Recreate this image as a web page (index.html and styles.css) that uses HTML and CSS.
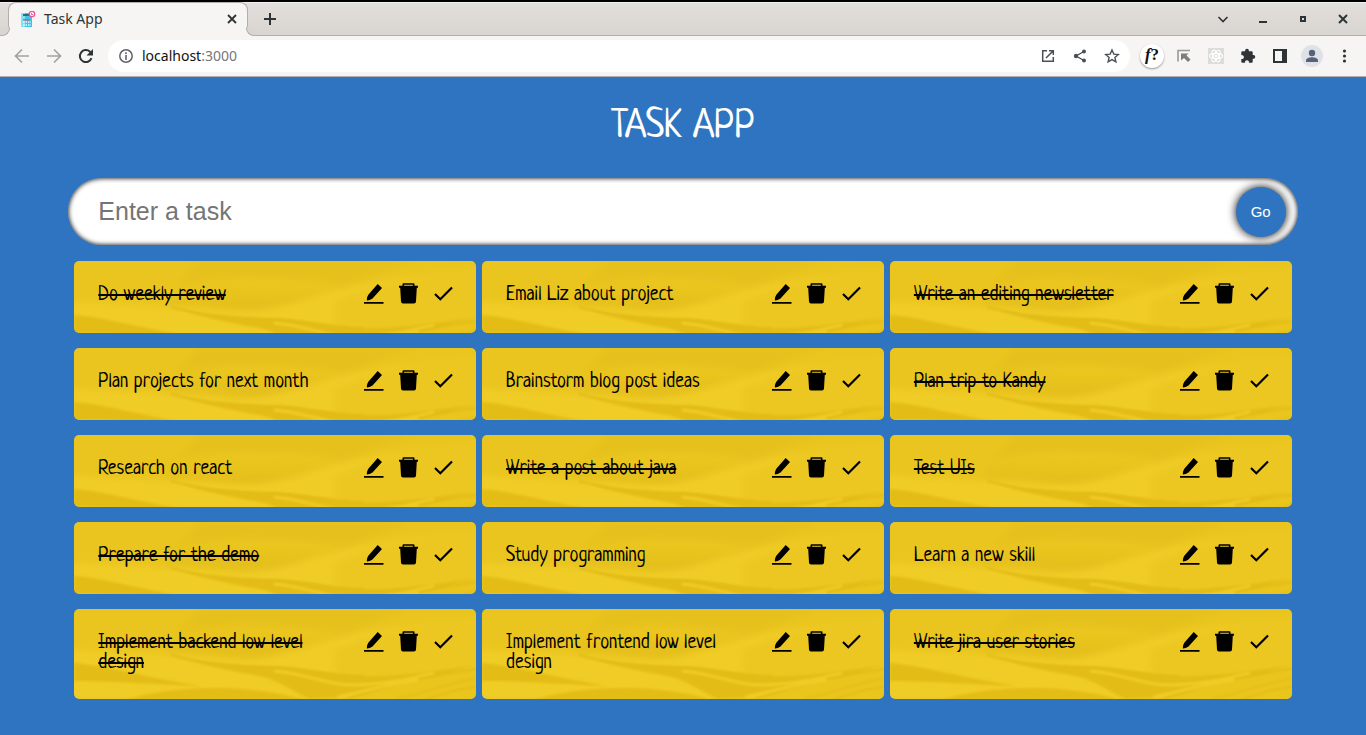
FILE: index.html
```html
<!DOCTYPE html>
<html lang="en">
<head>
<meta charset="utf-8">
<title>Task App</title>
<link rel="stylesheet" href="styles.css">
</head>
<body>
<svg class="sprite" aria-hidden="true">
  <symbol id="edit" viewBox="0.5 0.5 20 22"><path d="M14.200 1.500l4.300 3.900-9.500 10.600q-3 2.200-5.500 2.100-.6-2.800 1.300-5.900zM0 19.500h20v1.700H0z"/></symbol>
  <symbol id="trash" viewBox="0.5 0.500 20 22"><path d="M0.500 3.300H4V1.800Q4 .8 5 .8h10q1 0 1 1v1.500h3.500v2H18.300L17.500 19q-.1 2-2 2h-11q-1.900 0-2-2L1.700 5.300H.5zM5.600 3.300h8.800V2.200H5.600z"/></symbol>
  <symbol id="check" viewBox="0.5 0.500 20 22"><path d="M1.500 11.500l5.300 5.300L18.500 5" fill="none" stroke="currentColor" stroke-width="2.200"/></symbol>
</svg>

<header class="browser">
  <div class="tab-strip">
    <div class="tab">
      <svg class="favicon" width="16" height="16" viewBox="0 0 16 16"><path fill="#3bc5ea" d="M1 2h11v14H1z"/><path fill="#82e2f5" d="M1 2h4v14H1z"/><path fill="#20718f" d="M3 3h8v2H3z"/><path fill="#ef5577" d="M3 8h7v1.500H3z"/><path stroke="#e2fbff" stroke-dasharray="1.500 1" stroke-width="1.500" d="M3 11h8M3 14h8"/><circle cx="12" cy="3" r="2.700" fill="#fff" stroke="#f0568f" stroke-width="1.300"/><path d="M11.500 2v1.500H13" fill="none" stroke="#f0568f"/></svg>
      <span class="tab-title">Task App</span>
      <button class="tab-close" aria-label="Close tab"><svg width="10" height="10" viewBox="0 0 10 10"><path d="M1 1l8 8M9 1L1 9" stroke="currentColor" stroke-width="1.800"/></svg></button>
    </div>
    <button class="new-tab" aria-label="New tab"><svg width="12" height="12" viewBox="0 0 12 12"><path d="M6 0v12M0 6h12" stroke="currentColor" stroke-width="2"/></svg></button>
    <div class="window-controls">
      <button aria-label="Search tabs"><svg width="12" height="12" viewBox="0 0 12 12"><path d="M1.500 4L6 8.500 10.500 4" fill="none" stroke="currentColor" stroke-width="1.600"/></svg></button>
      <button aria-label="Minimize"><svg width="12" height="12" viewBox="0 0 12 12"><path d="M2 8h8v2H2z"/></svg></button>
      <button aria-label="Maximize"><svg width="12" height="12" viewBox="0 0 12 12"><path d="M4 4h4v4H4z" fill="none" stroke="currentColor" stroke-width="2"/></svg></button>
      <button aria-label="Close"><svg width="12" height="12" viewBox="0 0 12 12"><path d="M2 2l8 8M10 2l-8 8" stroke="currentColor" stroke-width="2"/></svg></button>
    </div>
  </div>
  <div class="toolbar">
    <nav class="tools">
      <button class="dim" aria-label="Back"><svg width="16" height="16" viewBox="0 0 16 16"><path d="M15 8H2M8 1.500L1.500 8 8 14.500" fill="none" stroke="currentColor" stroke-width="1.700"/></svg></button>
      <button class="dim" aria-label="Forward"><svg width="16" height="16" viewBox="0 0 16 16"><path d="M1 8h13M8 1.500L14.500 8 8 14.500" fill="none" stroke="currentColor" stroke-width="1.700"/></svg></button>
      <button aria-label="Reload"><svg width="16" height="16" viewBox="0 0 16 16"><path d="M13.500 10.200A6 6 0 1 1 12 3.700L13.600 5.500" fill="none" stroke="currentColor" stroke-width="2"/><path d="M15 1v6.500H8.500z"/></svg></button>
    </nav>
    <div class="address">
      <svg class="info" width="16" height="16" viewBox="0 0 16 16"><circle cx="8" cy="8" r="6.200" fill="none" stroke="currentColor" stroke-width="1.500"/><path d="M7.200 4.300h1.600v1.600H7.200zM7.200 7h1.600v5H7.200z"/></svg>
      <span class="url">localhost<span class="port">:3000</span></span>
      <div class="tools soft">
        <button aria-label="Open in app"><svg width="16" height="16" viewBox="0 0 16 16"><path d="M7 2.700H2.700v10.600h10.600V9M9 2.700h4.300V7M13.300 2.700L6 10" fill="none" stroke="currentColor" stroke-width="1.500"/></svg></button>
        <button aria-label="Share"><svg width="16" height="16" viewBox="0 0 16 16"><path d="M12 3.500L4 8l8 4.500" fill="none" stroke="currentColor" stroke-width="1.400"/><circle cx="12" cy="3.500" r="2"/><circle cx="4" cy="8" r="2.200"/><circle cx="12" cy="12.500" r="2"/></svg></button>
        <button aria-label="Bookmark"><svg width="16" height="16" viewBox="0 0 16 16"><path d="M8 2l1.800 4.100 4.500.4-3.400 3 1 4.400L8 11.600l-3.900 2.300 1-4.400-3.400-3 4.500-.4z" fill="none" stroke="currentColor" stroke-width="1.400"/></svg></button>
      </div>
    </div>
    <div class="tools">
      <button aria-label="Font finder"><span class="font-badge"><i>f</i>?</span></button>
      <button class="grey" aria-label="Cursor extension"><svg width="16" height="16" viewBox="0 0 16 16"><path d="M2 13.500V2.500h12" fill="none" stroke="#999" stroke-width="1.600"/><path d="M5 5.500h7.500l-2 2 4 4-2.500 2.500-4-4-3 2.500z"/></svg></button>
      <button aria-label="React tools"><svg width="16" height="16" viewBox="0 0 16 16"><path fill="#dcdcda" d="M0 0h16v16H0z"/><g fill="none" stroke="#fff" stroke-width="1.100"><ellipse cx="8" cy="8" rx="6.500" ry="2.600"/><ellipse cx="8" cy="8" rx="6.500" ry="2.600" transform="rotate(60 8 8)"/><ellipse cx="8" cy="8" rx="6.500" ry="2.600" transform="rotate(120 8 8)"/></g><circle cx="8" cy="8" r="1.300" fill="#fff"/></svg></button>
      <button aria-label="Extensions"><svg width="16" height="16" viewBox="0 0 16 16"><path d="M1.300 4.300Q1.300 3.200 2.400 3.200H5.200a1.900 1.900 0 1 1 3.600 0H11.600Q12.700 3.200 12.700 4.300V7.100a1.900 1.900 0 1 1 0 3.600V13.700Q12.700 14.800 11.600 14.800H8.900a2 2 0 1 0-3.800 0H2.400Q1.300 14.800 1.300 13.700V11a2 2 0 1 0 0-3.800z"/></svg></button>
      <button aria-label="Side panel"><svg width="16" height="16" viewBox="0 0 16 16"><path fill-rule="evenodd" d="M1 1h14v14H1zM3 3v10h7V3z"/></svg></button>
      <button aria-label="Profile"><svg width="22" height="22" viewBox="0 0 22 22"><circle cx="11" cy="11" r="11" fill="#dee1e6"/><g fill="#57617a"><circle cx="11" cy="8" r="3.200"/><path d="M5 17v-1.500C5 13 9 12.300 11 12.300s6 .7 6 3.200V17z"/></g></svg></button>
      <button aria-label="Menu"><svg width="16" height="16" viewBox="0 0 16 16"><circle cx="8.500" cy="3" r="1.600"/><circle cx="8.500" cy="8" r="1.600"/><circle cx="8.500" cy="13" r="1.600"/></svg></button>
    </div>
  </div>
</header>

<main class="app">
  <h1 class="heading">Task App</h1>
  <form class="entry">
    <input class="entry-box" type="text" placeholder="Enter a task" aria-label="Enter a task">
    <button class="entry-go" type="button">Go</button>
  </form>
  <ul class="tasks">
    <li class="task done"><span class="task-text">Do weekly review</span><span class="actions"><button aria-label="Edit"><svg><use href="#edit"/></svg></button><button aria-label="Delete"><svg><use href="#trash"/></svg></button><button aria-label="Done"><svg><use href="#check"/></svg></button></span></li>
    <li class="task"><span class="task-text">Email Liz about project</span><span class="actions"><button aria-label="Edit"><svg><use href="#edit"/></svg></button><button aria-label="Delete"><svg><use href="#trash"/></svg></button><button aria-label="Done"><svg><use href="#check"/></svg></button></span></li>
    <li class="task done"><span class="task-text">Write an editing newsletter</span><span class="actions"><button aria-label="Edit"><svg><use href="#edit"/></svg></button><button aria-label="Delete"><svg><use href="#trash"/></svg></button><button aria-label="Done"><svg><use href="#check"/></svg></button></span></li>
    <li class="task"><span class="task-text">Plan projects for next month</span><span class="actions"><button aria-label="Edit"><svg><use href="#edit"/></svg></button><button aria-label="Delete"><svg><use href="#trash"/></svg></button><button aria-label="Done"><svg><use href="#check"/></svg></button></span></li>
    <li class="task"><span class="task-text">Brainstorm blog post ideas</span><span class="actions"><button aria-label="Edit"><svg><use href="#edit"/></svg></button><button aria-label="Delete"><svg><use href="#trash"/></svg></button><button aria-label="Done"><svg><use href="#check"/></svg></button></span></li>
    <li class="task done"><span class="task-text">Plan trip to Kandy</span><span class="actions"><button aria-label="Edit"><svg><use href="#edit"/></svg></button><button aria-label="Delete"><svg><use href="#trash"/></svg></button><button aria-label="Done"><svg><use href="#check"/></svg></button></span></li>
    <li class="task"><span class="task-text">Research on react</span><span class="actions"><button aria-label="Edit"><svg><use href="#edit"/></svg></button><button aria-label="Delete"><svg><use href="#trash"/></svg></button><button aria-label="Done"><svg><use href="#check"/></svg></button></span></li>
    <li class="task done"><span class="task-text">Write a post about java</span><span class="actions"><button aria-label="Edit"><svg><use href="#edit"/></svg></button><button aria-label="Delete"><svg><use href="#trash"/></svg></button><button aria-label="Done"><svg><use href="#check"/></svg></button></span></li>
    <li class="task done"><span class="task-text">Test UIs</span><span class="actions"><button aria-label="Edit"><svg><use href="#edit"/></svg></button><button aria-label="Delete"><svg><use href="#trash"/></svg></button><button aria-label="Done"><svg><use href="#check"/></svg></button></span></li>
    <li class="task done"><span class="task-text">Prepare for the demo</span><span class="actions"><button aria-label="Edit"><svg><use href="#edit"/></svg></button><button aria-label="Delete"><svg><use href="#trash"/></svg></button><button aria-label="Done"><svg><use href="#check"/></svg></button></span></li>
    <li class="task"><span class="task-text">Study programming</span><span class="actions"><button aria-label="Edit"><svg><use href="#edit"/></svg></button><button aria-label="Delete"><svg><use href="#trash"/></svg></button><button aria-label="Done"><svg><use href="#check"/></svg></button></span></li>
    <li class="task"><span class="task-text">Learn a new skill</span><span class="actions"><button aria-label="Edit"><svg><use href="#edit"/></svg></button><button aria-label="Delete"><svg><use href="#trash"/></svg></button><button aria-label="Done"><svg><use href="#check"/></svg></button></span></li>
    <li class="task done"><span class="task-text">Implement backend low level design</span><span class="actions"><button aria-label="Edit"><svg><use href="#edit"/></svg></button><button aria-label="Delete"><svg><use href="#trash"/></svg></button><button aria-label="Done"><svg><use href="#check"/></svg></button></span></li>
    <li class="task"><span class="task-text">Implement frontend low level design</span><span class="actions"><button aria-label="Edit"><svg><use href="#edit"/></svg></button><button aria-label="Delete"><svg><use href="#trash"/></svg></button><button aria-label="Done"><svg><use href="#check"/></svg></button></span></li>
    <li class="task done"><span class="task-text">Write jira user stories</span><span class="actions"><button aria-label="Edit"><svg><use href="#edit"/></svg></button><button aria-label="Delete"><svg><use href="#trash"/></svg></button><button aria-label="Done"><svg><use href="#check"/></svg></button></span></li>
  </ul>
</main>
</body>
</html>
```
FILE: styles.css
```css
* { box-sizing: border-box; }

body {
  margin: 0;
  min-height: 100vh;
  background: #2f74c0;
  font-family: "Neucha", "Liberation Sans Narrow", "Liberation Sans", sans-serif;
}

button {
  padding: 0;
  border: 0;
  background: none;
  color: inherit;
  font: inherit;
  display: flex;
  align-items: center;
  justify-content: center;
}

svg { fill: currentColor; display: block; }
.sprite { display: none; }

.browser {
  border-top: 2px solid #000;
  border-bottom: 1px solid #b5b0ab;
  background: #f6f5f3;
  color: #2e3436;
  font: 14px/20px "Noto Sans", "Open Sans", sans-serif;
}

.tab-strip {
  display: flex;
  height: 34px;
  padding: 0 3px 0 8px;
  border-top: 1px solid #f3f1ef;
  border-bottom: 1px solid #b1aeab;
  background: linear-gradient(#e1dedb, #d9d6d1);
}

.tab {
  position: relative;
  display: flex;
  align-items: center;
  width: 240px;
  height: 34px;
  margin-top: -1px;
  padding: 0 10px 2px 11px;
  border: 1px solid #b1aeab;
  border-bottom: 0;
  border-radius: 8px 8px 0 0;
  background: #f6f5f3;
}

.tab::before,
.tab::after {
  content: "";
  position: absolute;
  bottom: 0;
  width: 8px;
  height: 8px;
  border-bottom: 1px solid #b1aeab;
  background: #d9d6d1;
}
.tab::before {
  left: -8px;
  border-right: 1px solid #b1aeab;
  border-radius: 0 0 8px 0;
  box-shadow: 2px 2px 0 #f6f5f3;
}
.tab::after {
  right: -8px;
  border-left: 1px solid #b1aeab;
  border-radius: 0 0 0 8px;
  box-shadow: -2px 2px 0 #f6f5f3;
}

.tab-title { flex: 1; margin-left: 8px; }
.tab-close { width: 10px; height: 20px; }
.new-tab { width: 44px; height: 32px; }
.window-controls { display: flex; margin-left: auto; }
.window-controls button { width: 40px; height: 32px; }

.toolbar {
  display: flex;
  align-items: center;
  gap: 6px;
  height: 40px;
  padding: 0 6px;
}
.tools { display: flex; }
.tools button { width: 32px; height: 32px; }
.dim { color: #a1a2a1; }
.soft { color: #4c5052; }
.grey { color: #7d7d7d; }

.address {
  display: flex;
  flex: 1;
  align-items: center;
  height: 32px;
  padding: 0 2px 0 10px;
  border-radius: 16px;
  background: #fff;
}
.info { color: #5f6368; }
.url { flex: 1; margin-left: 8px; color: #111; }
.port { color: #777; }

.font-badge {
  width: 24px;
  height: 24px;
  border-radius: 50%;
  background: #fff;
  box-shadow: 0 1px 2px rgba(0, 0, 0, 0.4);
  color: #111;
  font: bold 17px/22px "Liberation Serif", serif;
}

.app {
  width: 90%;
  margin: 0 auto;
  padding: 28px 0 36px;
}

.heading {
  margin: 0 0 28px;
  color: #fff;
  font-size: 40px;
  font-weight: 400;
  line-height: 45px;
  text-align: center;
  text-transform: uppercase;
}

.entry {
  display: flex;
  align-items: center;
  height: 67px;
  margin-bottom: 16px;
  padding: 0 12px 0 30px;
  border-radius: 34px;
  background: #fff;
  box-shadow: inset 0 0 5px #000;
  overflow: hidden;
}
.entry-box {
  flex: 1;
  min-width: 0;
  padding: 0 0 2px;
  border: 0;
  outline: 0;
  background: none;
  font: 25px/30px "Liberation Sans", Arial, sans-serif;
}
.entry-box::placeholder { color: #757575; }
.entry-go {
  width: 50px;
  height: 50px;
  border-radius: 50%;
  background: #2f74c0;
  box-shadow: 0 0 10px #000;
  color: #fff;
  font: 15px/20px "Liberation Sans", Arial, sans-serif;
}

.tasks {
  display: grid;
  grid-template-columns: repeat(3, 1fr);
  gap: 15px 6px;
  margin: 0;
  padding: 0 6px;
  list-style: none;
}

.task {
  display: flex;
  align-items: flex-start;
  justify-content: space-between;
  gap: 40px;
  min-height: 72px;
  padding: 22px 22px 25px 24px;
  border-radius: 5px;
  background: #ebc620 url("data:image/svg+xml,%3Csvg xmlns='http://www.w3.org/2000/svg' viewBox='0 0 402 90' preserveAspectRatio='none'%3E%3Cdefs%3E%3ClinearGradient id='a' x2='1' y2='.3'%3E%3Cstop stop-color='%23e8c11c'/%3E%3Cstop offset='1' stop-color='%23ecc822'/%3E%3C/linearGradient%3E%3ClinearGradient id='b' x2='0' y2='1'%3E%3Cstop stop-color='%23ecc721'/%3E%3Cstop offset='1' stop-color='%23e3be19'/%3E%3C/linearGradient%3E%3Cfilter id='s'%3E%3CfeGaussianBlur stdDeviation='3'/%3E%3C/filter%3E%3Cfilter id='t'%3E%3CfeGaussianBlur stdDeviation='.8'/%3E%3C/filter%3E%3C/defs%3E%3Cpath fill='%23eac51f' d='M0 0h402v90H0z'/%3E%3Cg filter='url(%23s)'%3E%3Cpath fill='%23e6c11c' d='M125 0C118 8 110 16 102 25C150 12 210 15 270 25C305 12 320 6 340 0z'/%3E%3Cpath fill='url(%23b)' d='M94 30C145 16 220 18 272 25C230 33 200 54 155 47C130 43 115 42 94 45z'/%3E%3Cpath fill='%23f0cc27' d='M-10 40C50 44 100 46 150 50C205 53 225 39 280 25C310 20 360 10 412 8V90H-10z'/%3E%3Cpath fill='%23ecc721' d='M260 40C320 20 360 10 412 8V90H260z'/%3E%3C/g%3E%3Cg filter='url(%23t)'%3E%3Cpath fill='%23e3bd18' d='M97 46C130 54 160 57 195 57C225 57 255 66 284 67C315 68 350 64 402 56C365 66 345 72 325 76C300 80 280 88 262 89L235 90C218 82 202 70 185 67C150 61 119 54 97 46z'/%3E%3Cpath fill='%23e3bd18' d='M0 54C30 56 64 67 126 77C90 76 40 72 0 72zM50 92C85 80 120 79 150 79C185 80 215 86 232 92z'/%3E%3Cpath fill='%23eac51f' d='M278 92C310 80 350 67 404 58V92z'/%3E%3Cpath fill='none' stroke='%23dfb914' stroke-width='1.500' d='M274 90C310 78 350 67 402 60M97 46C130 55 160 56 195 58C225 57 255 67 290 67'/%3E%3Cpath fill='none' stroke='%23f0cc27' stroke-width='3' d='M200 62C235 65 255 77 284 76S330 71 360 64M263 88C300 80 320 74 345 71'/%3E%3Cpath fill='none' stroke='%23e3be19' stroke-width='2' d='M322 90C350 85 375 73 402 70M350 90C370 86 385 78 402 78'/%3E%3C/g%3E%3C/svg%3E") 0 0 / 100% 90px;
  color: #000;
  font-size: 20px;
  line-height: 20px;
}
.task-text { padding-top: 3px; }
.done .task-text {
  text-decoration: line-through;
  text-decoration-thickness: 2px;
}

.actions { display: flex; flex: none; gap: 15px; }
.actions svg { width: 20px; height: 22px; overflow: visible; }
.actions use { overflow: visible; }
```
